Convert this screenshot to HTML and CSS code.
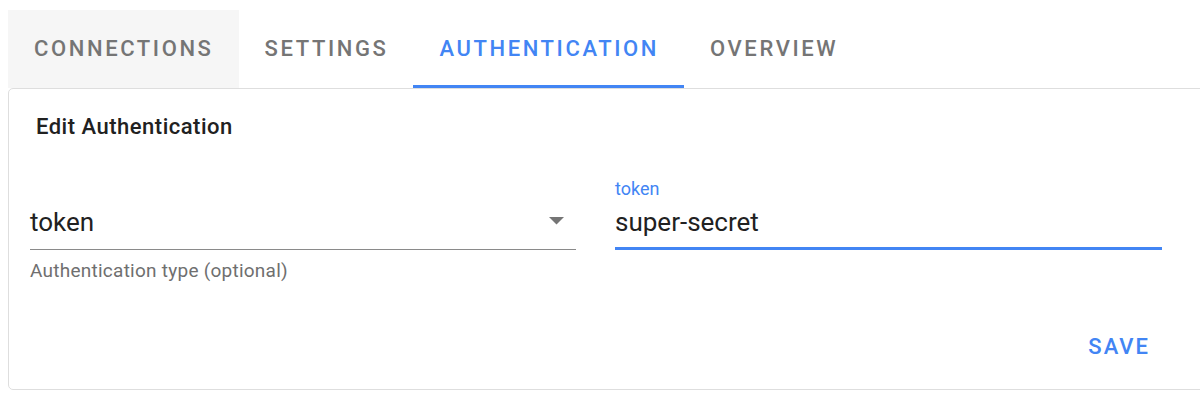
FILE: index.html
```html
<!DOCTYPE html>
<html lang="en">
<head>
<meta charset="utf-8">
<title>Edit Authentication</title>
<link rel="stylesheet" href="styles.css">
</head>
<body>
<div class="page">
  <nav class="tabs">
    <div class="tab tab-hover">CONNECTIONS</div>
    <div class="tab">SETTINGS</div>
    <div class="tab tab-active">AUTHENTICATION</div>
    <div class="tab">OVERVIEW</div>
  </nav>
  <section class="card">
    <h2 class="card-title">Edit Authentication</h2>
    <div class="fields">
      <div class="field field-select">
        <div class="field-label"></div>
        <div class="field-input select-input">
          <span class="value">token</span>
          <svg class="arrow" width="15" height="8" viewBox="0 0 15 8"><polygon points="0,0 15,0 7.5,7.5" fill="#757575"/></svg>
        </div>
        <div class="helper">Authentication type (optional)</div>
      </div>
      <div class="field field-text">
        <div class="field-label label-focused">token</div>
        <div class="field-input text-input focused">
          <span class="value">super-secret</span>
        </div>
      </div>
    </div>
    <div class="actions">
      <button class="btn-save" type="button">SAVE</button>
    </div>
  </section>
</div>
</body>
</html>
```

FILE: styles.css
```css
* { box-sizing: border-box; }
html, body { margin: 0; padding: 0; background: #ffffff; }
body {
  font-family: Roboto, "Liberation Sans", Arial, sans-serif;
  color: #212121;
  overflow: hidden;
}
.page {
  padding: 10px 0 0 8px;
  width: 1208px;
}
.tabs {
  display: flex;
  height: 78px;
}
.tab {
  display: flex;
  align-items: center;
  padding: 2px 25px 0 26px;
  font-size: 22px;
  font-weight: 500;
  letter-spacing: 2.6px;
  color: #757575;
  border-bottom: 3px solid transparent;
}
.tab-hover { background: #f6f6f6; }
.tab-active {
  color: #4285f4;
  border-bottom-color: #4285f4;
}
.card {
  border: 1px solid #dedede;
  border-radius: 5px;
  height: 302px;
  width: 1200px;
  padding: 25px 0 0 21px;
}
.card-title {
  margin: 0 0 0 6px;
  font-size: 22px;
  line-height: 26px;
  font-weight: 500;
  letter-spacing: 0.5px;
  color: #212121;
}
.fields {
  display: flex;
  gap: 39px;
  margin-top: 39px;
}
.field { display: flex; flex-direction: column; }
.field-select { width: 546px; }
.field-text { width: 547px; }
.field-label {
  height: 20px;
  font-size: 18px;
  line-height: 20px;
  margin-bottom: 8px;
}
.label-focused { color: #4285f4; }
.field-input {
  display: flex;
  align-items: center;
  justify-content: space-between;
  font-size: 26px;
  line-height: 30px;
  color: #212121;
}
.select-input {
  padding-bottom: 12px;
  border-bottom: 1px solid #8a8a8a;
}
.arrow { margin-right: 12px; margin-top: -3px; }
.text-input {
  padding-bottom: 10px;
  border-bottom: 3px solid #4285f4;
}
.helper {
  margin-top: 10px;
  font-size: 19px;
  line-height: 22px;
  letter-spacing: 0.25px;
  color: #6f6f6f;
}
.actions {
  display: flex;
  justify-content: flex-end;
  margin-top: 52px;
  padding-right: 57px;
}
.btn-save {
  border: 0;
  background: transparent;
  padding: 0;
  font-family: inherit;
  font-size: 22px;
  line-height: 26px;
  font-weight: 500;
  letter-spacing: 2px;
  color: #4285f4;
}
```
